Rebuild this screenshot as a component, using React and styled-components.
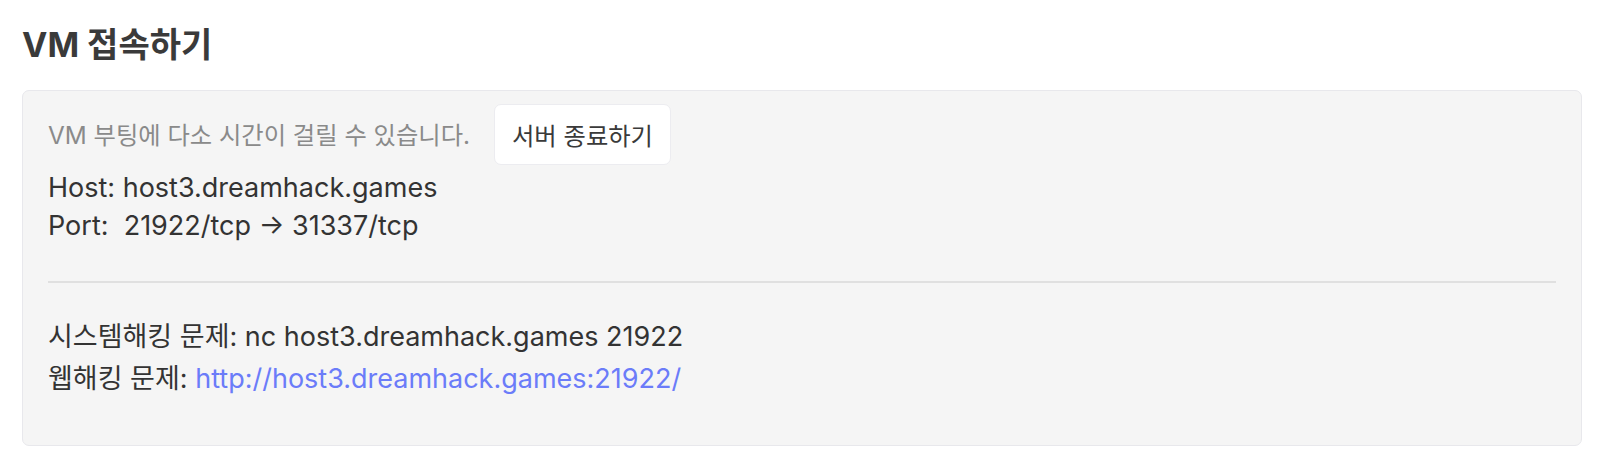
import React from "react";
import styled, { createGlobalStyle } from "styled-components";

const GlobalStyle = createGlobalStyle`
  html, body {
    margin: 0;
    padding: 0;
    background: #fff;
  }
  body {
    font-family: Inter, "Noto Sans CJK KR", sans-serif;
    color: #333;
  }
`;

const Page = styled.section`
  padding: 22px 24px 16px 22px;
`;

const Title = styled.h2`
  margin: 0 0 22px;
  font-size: 34px;
  font-weight: 700;
  line-height: 46px;
  color: #3a3a3a;
`;

const Panel = styled.div`
  background: #f5f5f5;
  border: 1px solid #e8e8ec;
  border-radius: 7px;
  padding: 13px 25px 45px;
  font-size: 27px;
  line-height: 38px;
`;

const StatusRow = styled.div`
  display: flex;
  align-items: center;
  gap: 24px;
  margin-bottom: 4px;
`;

const Hint = styled.span`
  color: #8a8a8a;
  font-size: 24.3px;
`;

const Button = styled.button`
  font-family: inherit;
  font-size: 24.3px;
  color: #3a3a3a;
  background: #fff;
  border: 1px solid #ececf0;
  border-radius: 7px;
  padding: 0 17px;
  height: 61px;
  cursor: pointer;
`;

const Line = styled.div`
  white-space: pre;
  line-height: ${(p) => (p.$loose ? "42px" : "38px")};
`;

const Divider = styled.hr`
  border: 0;
  height: 2px;
  background: #e0e0e0;
  margin: 36px 0 33px;
`;

const Link = styled.a`
  color: #6b7cf9;
  text-decoration: none;
`;

export default function App() {
  return (
    <Page>
      <GlobalStyle />
      <Title>VM 접속하기</Title>
      <Panel>
        <StatusRow>
          <Hint>VM 부팅에 다소 시간이 걸릴 수 있습니다.</Hint>
          <Button type="button">서버 종료하기</Button>
        </StatusRow>
        <Line>Host: host3.dreamhack.games</Line>
        <Line>Port:  21922/tcp → 31337/tcp</Line>
        <Divider />
        <Line $loose>시스템해킹 문제: nc host3.dreamhack.games 21922</Line>
        <Line $loose>
          웹해킹 문제:{" "}
          <Link href="#">http://host3.dreamhack.games:21922/</Link>
        </Line>
      </Panel>
    </Page>
  );
}
